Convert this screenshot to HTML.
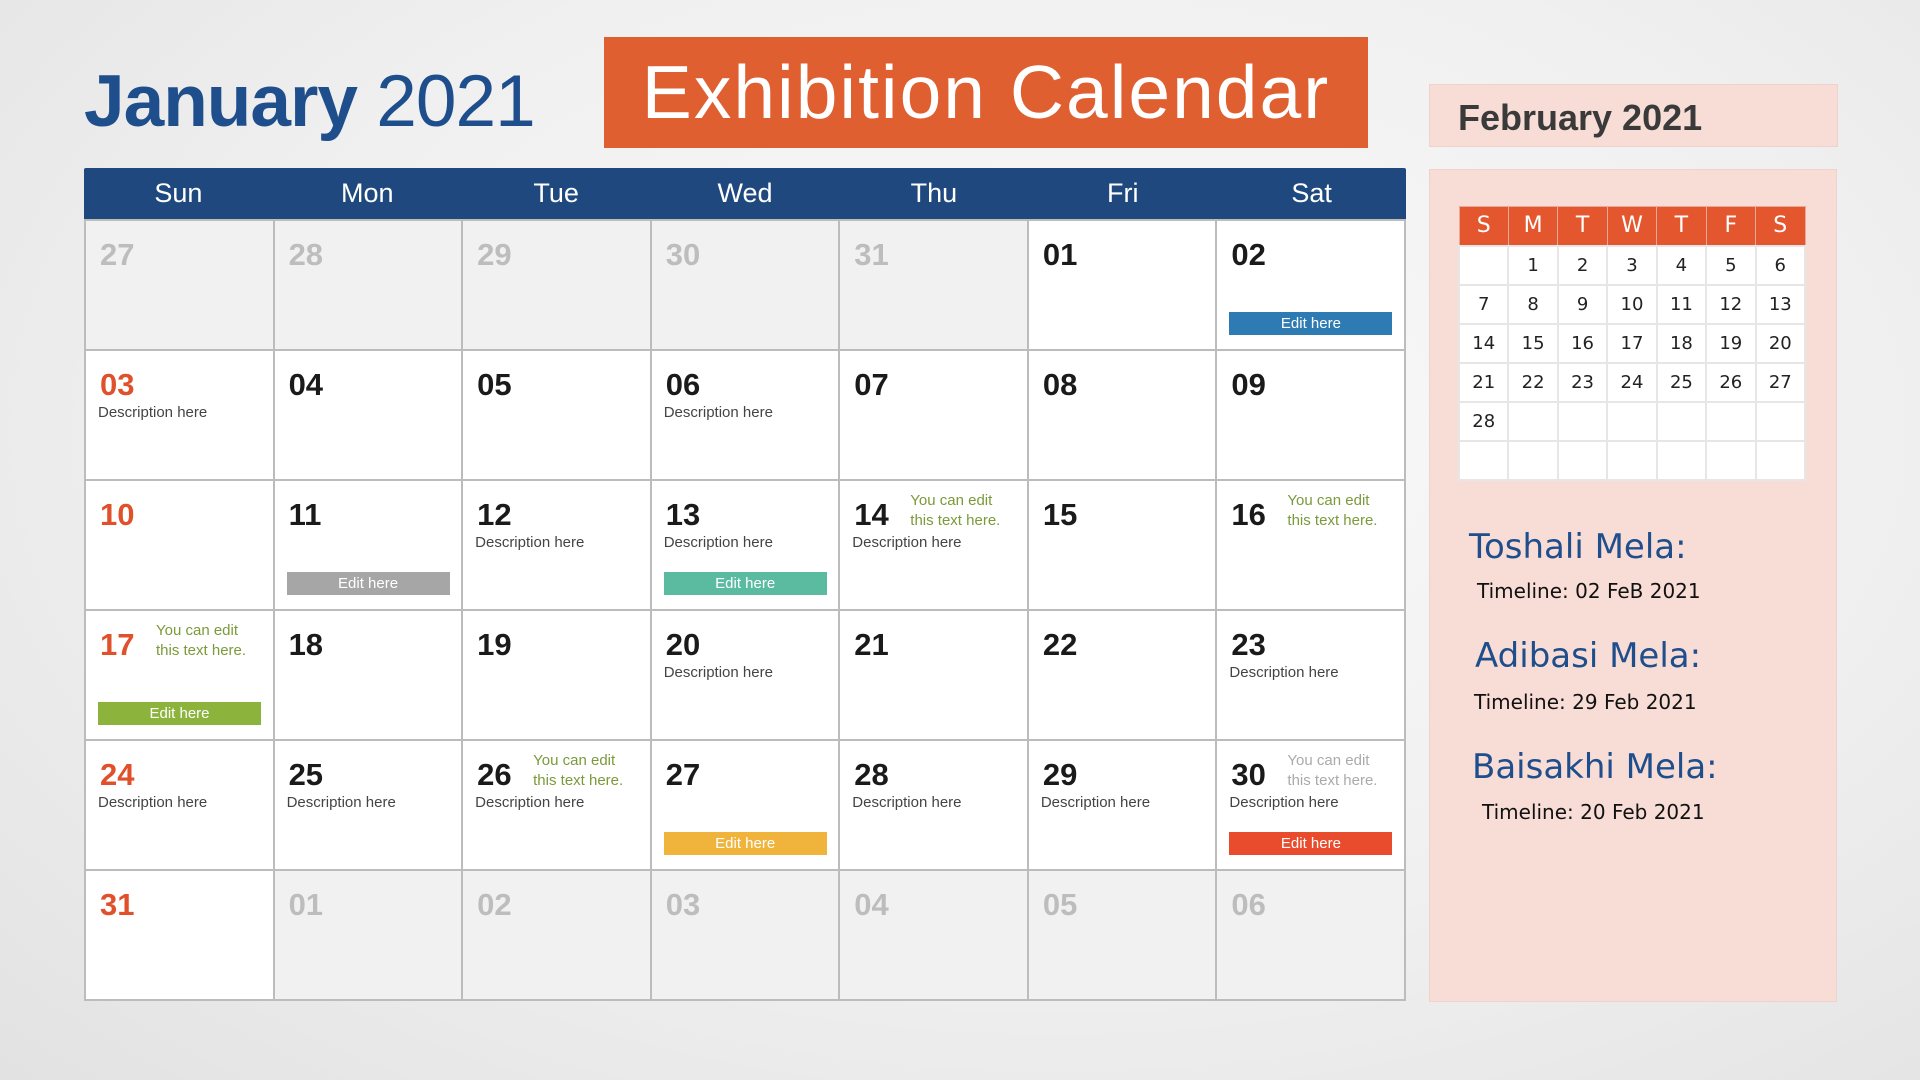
<!DOCTYPE html>
<html><head><meta charset="utf-8"><style>
*{margin:0;padding:0;box-sizing:border-box}
body{width:1920px;height:1080px;overflow:hidden;font-family:"Liberation Sans",sans-serif;background:radial-gradient(ellipse at 55% 40%,#fafafa 0%,#f0f0f0 55%,#e2e2e2 100%);position:relative}
.t1{position:absolute;left:84px;top:60px;font-size:73px;color:#1f4e8c;letter-spacing:-1px;white-space:nowrap}
.t1 b{font-weight:bold}
.ob{position:absolute;left:604px;top:37px;width:764px;height:111px;background:#df5f30;color:#fff;font-size:75px;line-height:111px;text-align:center;letter-spacing:2px}
.hdr{position:absolute;left:84px;top:168px;width:1322px;height:51px;background:#1f487e;display:flex;border-radius:2px 2px 0 0}
.hdr div{flex:1;color:#fff;font-size:27px;text-align:center;line-height:51px}
.grid{position:absolute;left:84px;top:219px;width:1322px;height:782px;background:#bcbcbc;border:2px solid #bcbcbc;display:grid;grid-template-columns:repeat(7,1fr);grid-template-rows:repeat(6,1fr);gap:2px}
.c{background:#fff;position:relative}
.g{background:#f1f1f1}
.n{position:absolute;left:14px;top:16px;font-size:31px;font-weight:bold;color:#1a1a1a}
.g .n{color:#bdbdbd}
.r .n{color:#e0502a}
.d{position:absolute;left:12px;top:53px;font-size:15px;color:#444}
.y{position:absolute;left:70px;top:10px;font-size:15px;line-height:20px;color:#7b9a3a}
.y.gr{color:#aaa}
.b{position:absolute;left:12px;width:163px;top:91px;height:23px;color:#fff;font-size:15px;text-align:center;line-height:23px}
.fb{position:absolute;left:1429px;top:84px;width:409px;height:63px;background:#f8ddd7;border:1px solid #efd2cc}
.fb span{position:absolute;left:28px;top:12px;font-size:36px;font-weight:bold;color:#3a3a3a}
.pp{position:absolute;left:1429px;top:169px;width:408px;height:833px;background:#f8ddd7;border:1px solid #efd2cc}
table{position:absolute;left:1458px;top:206px;width:348px;border-collapse:collapse;font-family:"DejaVu Sans",sans-serif}
th{background:#e4572e;color:#fff;font-weight:normal;font-size:22px;height:39px;border:1px solid #e8a898}
td{background:#fff;height:39px;text-align:center;font-size:18px;color:#222;border:2px solid #e6e6e6;width:49.7px}
.m{position:absolute;font-size:34px;color:#1f4e8c;font-family:"DejaVu Sans",sans-serif}
.tl{position:absolute;font-size:20px;color:#111;font-family:"DejaVu Sans",sans-serif}
</style></head><body>
<div class="t1"><b>January</b> 2021</div>
<div class="ob">Exhibition Calendar</div>
<div class="hdr"><div>Sun</div><div>Mon</div><div>Tue</div><div>Wed</div><div>Thu</div><div>Fri</div><div>Sat</div></div>
<div class="grid">
<div class="c g"><span class="n">27</span></div>
<div class="c g"><span class="n">28</span></div>
<div class="c g"><span class="n">29</span></div>
<div class="c g"><span class="n">30</span></div>
<div class="c g"><span class="n">31</span></div>
<div class="c"><span class="n">01</span></div>
<div class="c"><span class="n">02</span><div class="b" style="background:#2e7bb4">Edit here</div></div>

<div class="c r"><span class="n">03</span><div class="d">Description here</div></div>
<div class="c"><span class="n">04</span></div>
<div class="c"><span class="n">05</span></div>
<div class="c"><span class="n">06</span><div class="d">Description here</div></div>
<div class="c"><span class="n">07</span></div>
<div class="c"><span class="n">08</span></div>
<div class="c"><span class="n">09</span></div>

<div class="c r"><span class="n">10</span></div>
<div class="c"><span class="n">11</span><div class="b" style="background:#a6a6a6">Edit here</div></div>
<div class="c"><span class="n">12</span><div class="d">Description here</div></div>
<div class="c"><span class="n">13</span><div class="d">Description here</div><div class="b" style="background:#5bbba0">Edit here</div></div>
<div class="c"><span class="n">14</span><div class="y">You can edit<br>this text here.</div><div class="d">Description here</div></div>
<div class="c"><span class="n">15</span></div>
<div class="c"><span class="n">16</span><div class="y">You can edit<br>this text here.</div></div>

<div class="c r"><span class="n">17</span><div class="y">You can edit<br>this text here.</div><div class="b" style="background:#8cb43c">Edit here</div></div>
<div class="c"><span class="n">18</span></div>
<div class="c"><span class="n">19</span></div>
<div class="c"><span class="n">20</span><div class="d">Description here</div></div>
<div class="c"><span class="n">21</span></div>
<div class="c"><span class="n">22</span></div>
<div class="c"><span class="n">23</span><div class="d">Description here</div></div>

<div class="c r"><span class="n">24</span><div class="d">Description here</div></div>
<div class="c"><span class="n">25</span><div class="d">Description here</div></div>
<div class="c"><span class="n">26</span><div class="y">You can edit<br>this text here.</div><div class="d">Description here</div></div>
<div class="c"><span class="n">27</span><div class="b" style="background:#f0b43c">Edit here</div></div>
<div class="c"><span class="n">28</span><div class="d">Description here</div></div>
<div class="c"><span class="n">29</span><div class="d">Description here</div></div>
<div class="c"><span class="n">30</span><div class="y gr">You can edit<br>this text here.</div><div class="d">Description here</div><div class="b" style="background:#e84c2c">Edit here</div></div>

<div class="c r"><span class="n">31</span></div>
<div class="c g"><span class="n">01</span></div>
<div class="c g"><span class="n">02</span></div>
<div class="c g"><span class="n">03</span></div>
<div class="c g"><span class="n">04</span></div>
<div class="c g"><span class="n">05</span></div>
<div class="c g"><span class="n">06</span></div>
</div>
<div class="fb"><span>February 2021</span></div>
<div class="pp"></div>
<table>
<tr><th>S</th><th>M</th><th>T</th><th>W</th><th>T</th><th>F</th><th>S</th></tr>
<tr><td></td><td>1</td><td>2</td><td>3</td><td>4</td><td>5</td><td>6</td></tr>
<tr><td>7</td><td>8</td><td>9</td><td>10</td><td>11</td><td>12</td><td>13</td></tr>
<tr><td>14</td><td>15</td><td>16</td><td>17</td><td>18</td><td>19</td><td>20</td></tr>
<tr><td>21</td><td>22</td><td>23</td><td>24</td><td>25</td><td>26</td><td>27</td></tr>
<tr><td>28</td><td></td><td></td><td></td><td></td><td></td><td></td></tr>
<tr><td></td><td></td><td></td><td></td><td></td><td></td><td></td></tr>
</table>
<div class="m" style="left:1469px;top:527px">Toshali Mela:</div>
<div class="tl" style="left:1477px;top:579px">Timeline: 02 FeB 2021</div>
<div class="m" style="left:1475px;top:636px">Adibasi Mela:</div>
<div class="tl" style="left:1474px;top:690px">Timeline: 29 Feb 2021</div>
<div class="m" style="left:1472px;top:747px">Baisakhi Mela:</div>
<div class="tl" style="left:1482px;top:800px">Timeline: 20 Feb 2021</div>
</body></html>
